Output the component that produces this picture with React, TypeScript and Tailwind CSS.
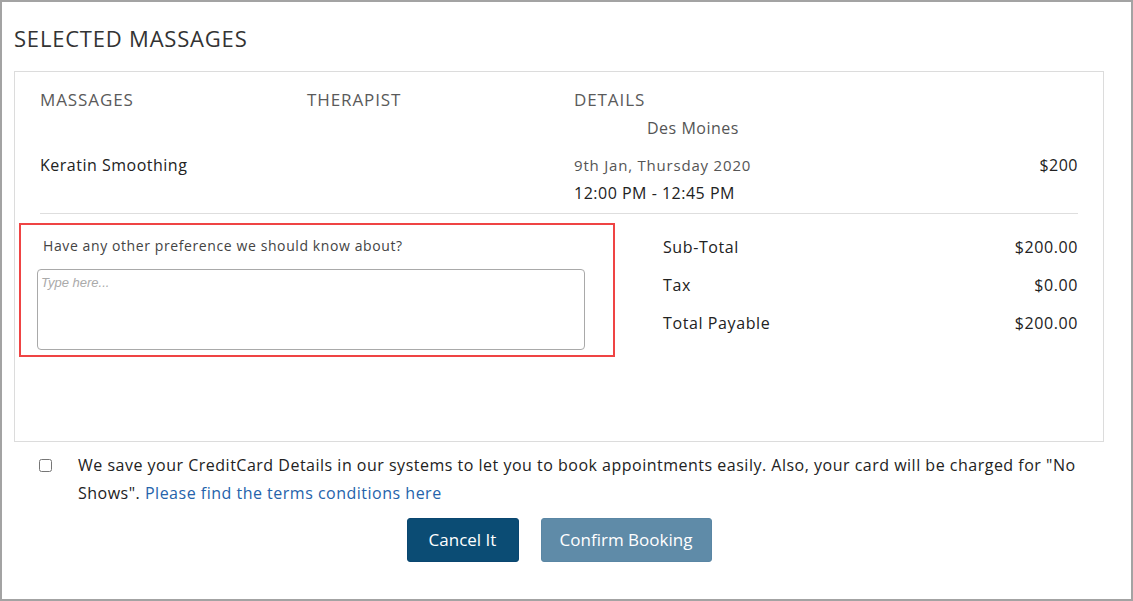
export default function App() {
  return (
    <div
      className="w-[1133px] h-[601px] border-2 border-[#a3a3a3] bg-white px-[12px] pt-[22px] tracking-[0.5px] text-[#222]"
      style={{ fontFamily: '"Open Sans", "Noto Sans", Arial, sans-serif' }}
    >
      <h1 className="text-[22px] leading-[28px] text-[#333] tracking-[0.8px]">SELECTED MASSAGES</h1>

      <div className="mt-[19px] h-[371px] w-[1090px] border border-[#dcdcdc]">
        {/* massage row */}
        <div className="px-[25px] pt-[16px]">
          <div className="grid grid-cols-[267px_267px_1fr_auto] text-[17px] leading-[24px] tracking-[0.9px] text-[#5a5a5a]">
            <div>MASSAGES</div>
            <div>THERAPIST</div>
            <div>DETAILS</div>
            <div />
          </div>
          <div className="mt-[4px] grid grid-cols-[267px_267px_1fr_auto]">
            <div />
            <div />
            <div className="pl-[73px] text-[16px] leading-[24px] text-[#555]">Des Moines</div>
            <div />
          </div>
          <div className="mt-[11px] grid grid-cols-[267px_267px_1fr_auto] leading-[28px]">
            <div className="text-[16px] text-[#222]">Keratin Smoothing</div>
            <div />
            <div>
              <div className="text-[15px] tracking-[0.8px] text-[#555]">9th Jan, Thursday 2020</div>
              <div className="text-[16px] text-[#222]">12:00 PM - 12:45 PM</div>
            </div>
            <div className="text-[16px] text-[#222]">$200</div>
          </div>
          <div className="mt-[6px] h-px bg-[#dedede]" />
        </div>

        {/* notes + totals */}
        <div className="mt-[9px] flex">
          <div className="ml-[4px] h-[134px] w-[596px] border-2 border-[#ef4444] pl-[16px] pt-[11px]">
            <div className="pl-[6px] text-[14px] leading-[20px] tracking-[0.6px] text-[#444]">
              Have any other preference we should know about?
            </div>
            <textarea
              placeholder="Type here..."
              className="mt-[13px] block h-[81px] w-[548px] resize-none rounded-[4px] border border-[#a9a9a9] px-[3px] py-[3px] text-[13px] italic tracking-normal outline-none placeholder:text-[#aaa]"
              style={{ fontFamily: '"Liberation Sans", Arial, sans-serif' }}
            />
          </div>
          <div className="ml-[48px] mr-[25px] flex flex-1 flex-col gap-[14px] pt-[12px] text-[16px] leading-[24px] tracking-[0.6px] text-[#222]">
            <div className="flex justify-between">
              <span>Sub-Total</span>
              <span>$200.00</span>
            </div>
            <div className="flex justify-between">
              <span>Tax</span>
              <span>$0.00</span>
            </div>
            <div className="flex justify-between">
              <span>Total Payable</span>
              <span>$200.00</span>
            </div>
          </div>
        </div>
      </div>

      {/* terms */}
      <div className="mt-[9px] flex">
        <input
          type="checkbox"
          className="ml-[25px] mt-[8px] h-[13px] w-[13px] shrink-0"
        />
        <p className="ml-[26px] w-[1000px] text-[16px] leading-[28px] text-[#222]">
          We save your CreditCard Details in our systems to let you to book appointments easily. Also, your card will be
          charged for "No Shows".{' '}
          <a href="#" className="text-[#2563ab]">
            Please find the terms conditions here
          </a>
        </p>
      </div>

      <div className="mt-[11px] flex w-[1090px] justify-center gap-[22px] tracking-normal">
        <button className="h-[44px] w-[112px] rounded-[3px] border border-[#0a4670] bg-[#0b4c74] text-[17px] text-white">
          Cancel It
        </button>
        <button className="h-[44px] w-[171px] rounded-[3px] border border-[#5a86a4] bg-[#5f8ba8] text-[17px] text-white">
          Confirm Booking
        </button>
      </div>
    </div>
  );
}
